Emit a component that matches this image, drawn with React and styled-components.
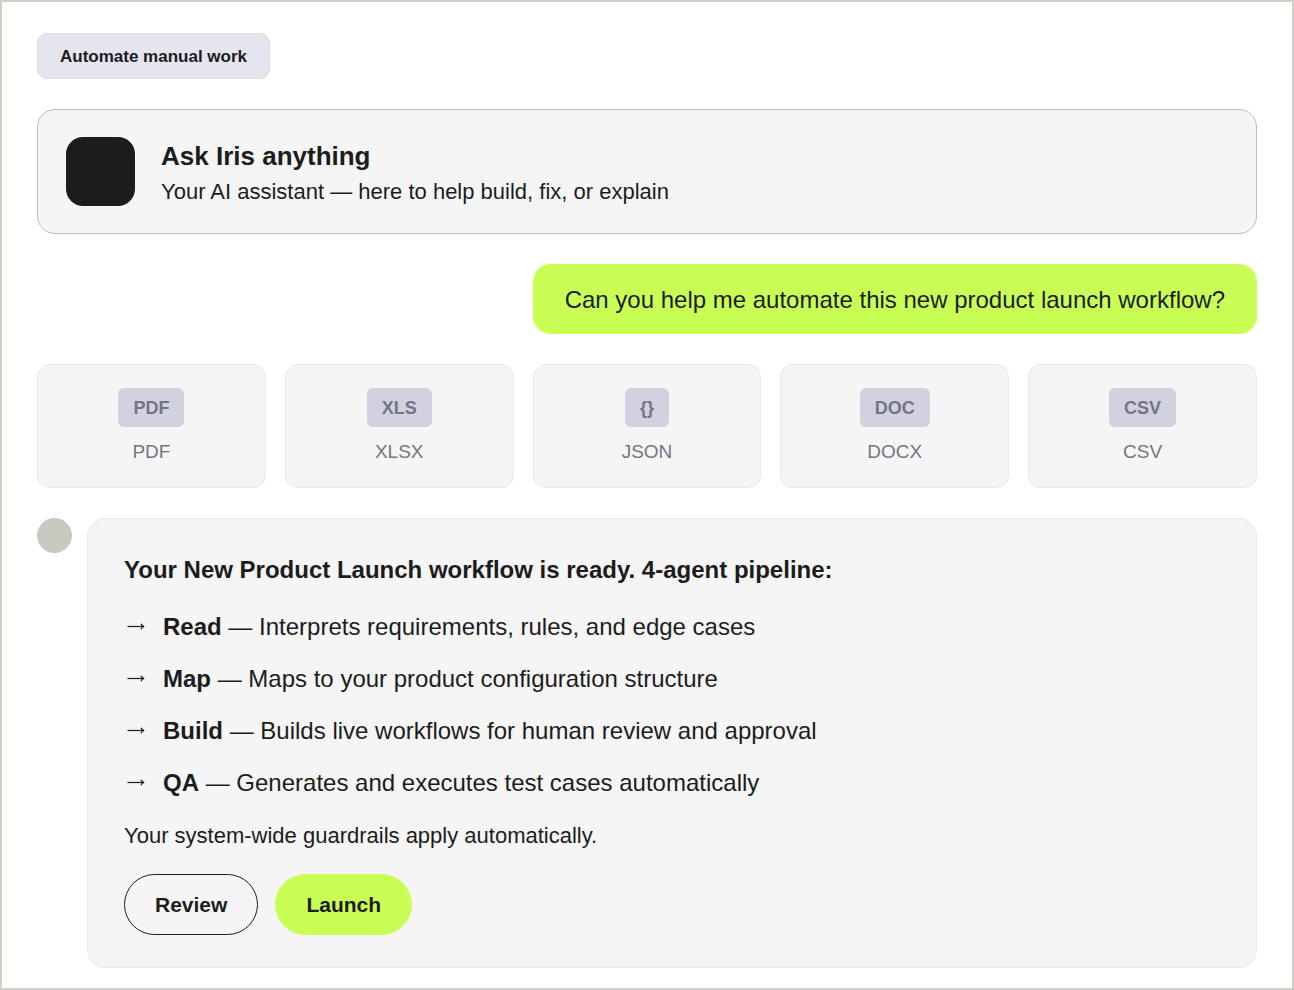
import React from "react";
import styled, { createGlobalStyle } from "styled-components";

const files = [
    { badge: "PDF", name: "PDF" },
    { badge: "XLS", name: "XLSX" },
    { badge: "{}", name: "JSON" },
    { badge: "DOC", name: "DOCX" },
    { badge: "CSV", name: "CSV" },
];

const steps = [
    { name: "Read", text: "Interprets requirements, rules, and edge cases" },
    { name: "Map", text: "Maps to your product configuration structure" },
    { name: "Build", text: "Builds live workflows for human review and approval" },
    { name: "QA", text: "Generates and executes test cases automatically" },
];

const App = () => {
    return (
        <>
        <GlobalStyle />
        <Panel>
            <Chip type="button">Automate manual work</Chip>
            <Intro>
                <Logo />
                <IntroText>
                    <h1>Ask Iris anything</h1>
                    <p>Your AI assistant — here to help build, fix, or explain</p>
                </IntroText>
            </Intro>
            <Question>Can you help me automate this new product launch workflow?</Question>
            <Files>
                {files.map((file) => (
                    <File key={file.name}>
                        <Badge>{file.badge}</Badge>
                        <FileName>{file.name}</FileName>
                    </File>
                ))}
            </Files>
            <Reply>
                <Avatar />
                <Answer>
                    <h2>Your New Product Launch workflow is ready. 4-agent pipeline:</h2>
                    <Steps>
                        {steps.map((step) => (
                            <Step key={step.name}>
                                <Arrow />
                                <span><strong>{step.name}</strong> — {step.text}</span>
                            </Step>
                        ))}
                    </Steps>
                    <Note>Your system-wide guardrails apply automatically.</Note>
                    <Actions>
                        <Button type="button">Review</Button>
                        <Button type="button" $primary>Launch</Button>
                    </Actions>
                </Answer>
            </Reply>
        </Panel>
        </>
    )
};

const Arrow = () => (
    <ArrowIcon viewBox="0 0 18 8" aria-hidden="true">
        <path d="M0.5 3.5H17" />
        <path d="M14 0.7C14.5 2.2 15.5 3.2 17.2 3.5C15.5 3.8 14.5 4.8 14 6.3" />
    </ArrowIcon>
);

const GlobalStyle = createGlobalStyle`
* {
    margin: 0;
    padding: 0;
    box-sizing: border-box;
}
body {
    background: #ffffff;
    color: #1c1c1d;
    font-family: "Liberation Sans", Arial, sans-serif;
}
button {
    font-family: inherit;
    color: inherit;
    cursor: pointer;
}
`

const Panel = styled.main`
display: flex;
flex-direction: column;
gap: 30px;
min-height: 100vh;
padding: 31px 35px 20px;
border: 2px solid #d0d0c6;
`

const Chip = styled.button`
align-self: flex-start;
padding: 2px 22px 0;
border: 1px solid #dcdce4;
border-radius: 10px;
background: #e5e5ef;
font-size: 17px;
font-weight: 600;
line-height: 42px;
`

const Intro = styled.header`
display: flex;
align-items: center;
gap: 26px;
padding: 27px 28px;
border: 1px solid #bcbcbc;
border-radius: 18px;
background: #f5f5f5;
`

const IntroText = styled.div`
display: grid;
gap: 5px;
padding-top: 2px;
h1 {
    font-size: 26px;
    line-height: 34px;
}
p {
    font-size: 22px;
    line-height: 28px;
}
`

const Logo = styled.div`
flex: none;
width: 69px;
height: 69px;
border-radius: 17px;
background: #1c1c1d;
`

const Question = styled.p`
align-self: flex-end;
padding: 18px 32px 16px;
border-radius: 18px;
background: #c9ff54;
font-size: 24px;
line-height: 36px;
`

const Files = styled.ul`
display: grid;
grid-template-columns: repeat(5, 1fr);
gap: 19px;
list-style: none;
`

const File = styled.li`
display: flex;
flex-direction: column;
align-items: center;
gap: 10px;
padding: 23px 12px 20px;
border: 1px solid #e8e8e8;
border-radius: 13px;
background: #f5f5f5;
color: #747583;
`

const Badge = styled.span`
padding: 2px 15px 0;
border-radius: 6px;
background: #d1d1df;
font-size: 18px;
font-weight: 700;
line-height: 37px;
`

const FileName = styled.span`
font-size: 19px;
line-height: 30px;
`

const Reply = styled.section`
display: flex;
align-items: flex-start;
gap: 15px;
`

const Avatar = styled.div`
flex: none;
width: 35px;
height: 35px;
border-radius: 50%;
background: #c9c9c1;
`

const Answer = styled.article`
flex: 1;
padding: 33px 36px 32px;
border: 1px solid #e8e8e8;
border-radius: 18px;
background: #f5f5f5;
h2 {
    font-size: 24px;
    line-height: 36px;
}
`

const Steps = styled.ul`
display: grid;
gap: 16px;
margin: 21px 0 19px;
list-style: none;
`

const Step = styled.li`
display: flex;
align-items: center;
gap: 18px;
padding-left: 3px;
font-size: 24px;
line-height: 36px;
`

const ArrowIcon = styled.svg`
flex: none;
width: 18px;
height: 8px;
fill: none;
stroke: #1c1c1d;
stroke-width: 1.2;
`

const Note = styled.p`
font-size: 22px;
line-height: 32px;
`

const Actions = styled.div`
display: flex;
gap: 17px;
margin-top: 22px;
`

const Button = styled.button`
padding: 0 30px;
border: 1px solid ${(props) => (props.$primary ? "#c9ff54" : "#1c1c1d")};
border-radius: 31px;
background: ${(props) => (props.$primary ? "#c9ff54" : "transparent")};
font-size: 21px;
font-weight: 600;
line-height: 59px;
`

export default App
